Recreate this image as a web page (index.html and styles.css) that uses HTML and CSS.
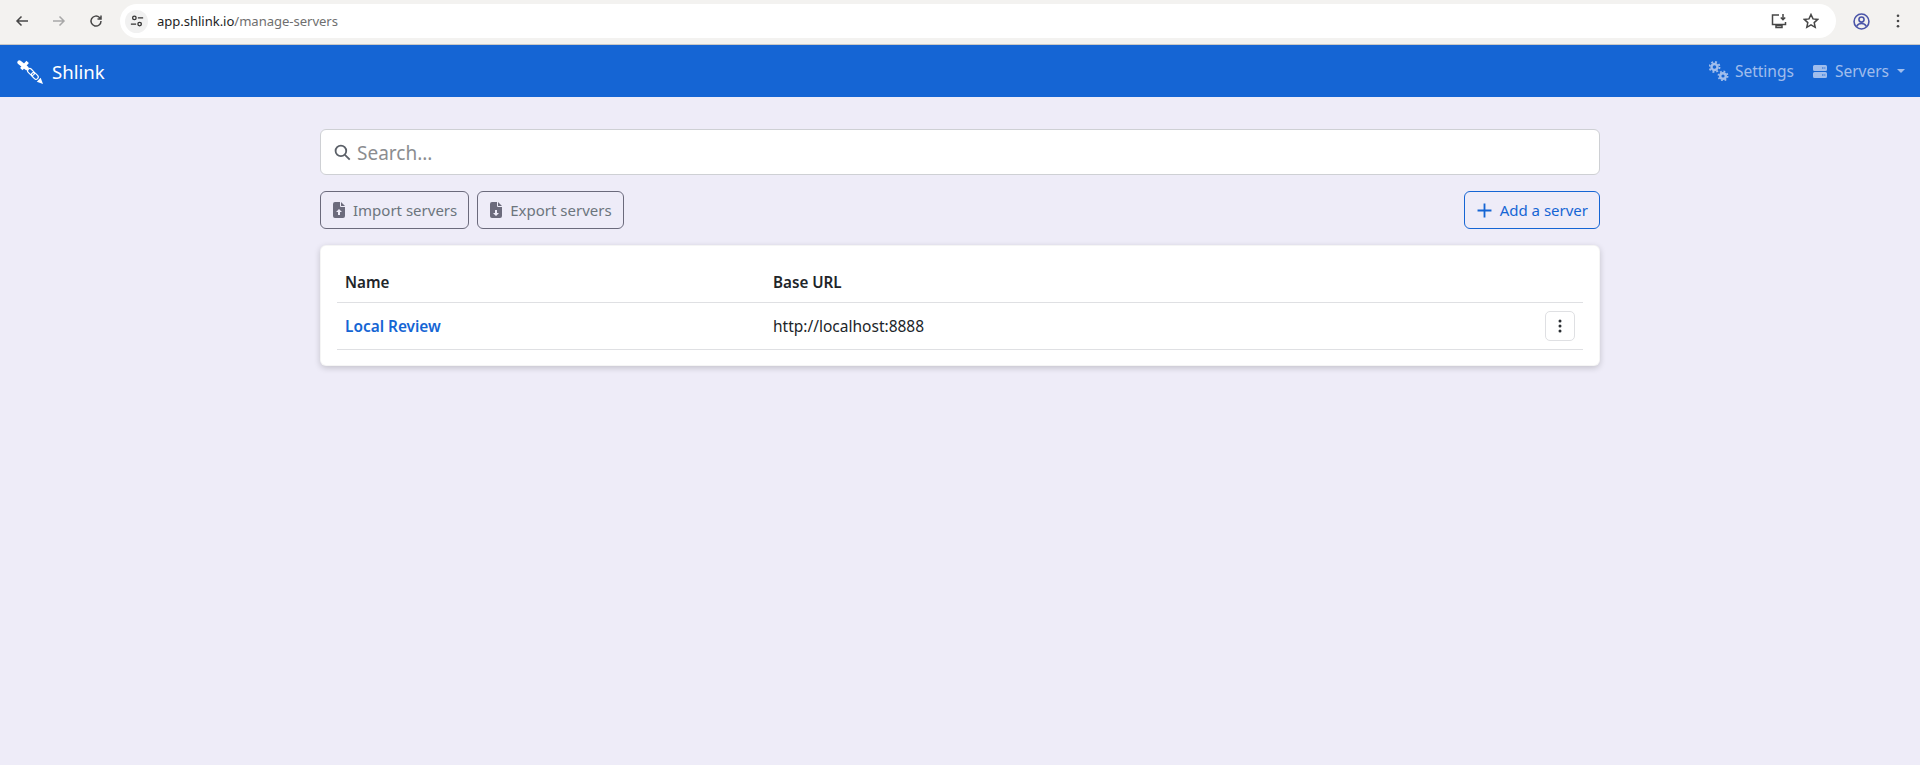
FILE: index.html
```html
<!DOCTYPE html>
<html lang="en">
<head>
<meta charset="utf-8">
<title>Shlink</title>
<link rel="stylesheet" href="styles.css">
</head>
<body>
<header class="toolbar">
  <div class="tb-nav">
    <svg class="tb-icon" viewBox="0 0 16 16"><path d="M14 8H3M7.500 3.500 3 8l4.500 4.500"/></svg>
    <svg class="tb-icon dim" viewBox="0 0 16 16"><path d="M2 8h11M8.500 3.500 13 8l-4.500 4.500"/></svg>
    <svg class="tb-icon" viewBox="0 0 16 16"><path d="M13 8a5 5 0 1 1-1.500-3.500L13 6M13 2.500V6H9.500"/></svg>
  </div>
  <div class="omnibox">
    <span class="chip"><svg viewBox="0 0 16 16"><circle cx="5" cy="4.500" r="2"/><path d="M9 4.500h6M1 11.500h6"/><circle cx="11" cy="11.500" r="2"/></svg></span>
    <span class="url">app.shlink.io<span class="url-path">/manage-servers</span></span>
    <span class="omni-end">
      <svg class="tb-icon" viewBox="0 0 16 16"><path d="M8 2H1.500v9.500h13V9M5 14.500h6v-2H5zM12 1v5.500M9.800 4.500l2.200 2.200 2.200-2.200"/></svg>
      <svg class="tb-icon" viewBox="0 0 16 16"><path d="m8 1.500 2 4.400 4.700.5-3.500 3.200 1 4.700L8 11.900l-4.200 2.400 1-4.700-3.500-3.200 4.700-.5z"/></svg>
    </span>
  </div>
  <div class="tb-end">
    <svg class="tb-icon profile" viewBox="0 0 16 16"><circle cx="8" cy="8" r="7"/><circle cx="8" cy="6.200" r="2.400"/><path d="M3.500 12.500c1-2 2.500-2.600 4.500-2.600s3.500.6 4.500 2.600"/></svg>
    <svg class="tb-dots" viewBox="0 0 4 16"><circle cx="2" cy="2" r="1.500"/><circle cx="2" cy="8" r="1.500"/><circle cx="2" cy="14" r="1.500"/></svg>
  </div>
</header>

<nav class="navbar">
  <a class="brand">
    <svg class="brand-logo" viewBox="0 0 28 28">
      <path class="logo-bar" d="M2.500 4.500 10 10.500"/>
      <path class="logo-cross" d="M4.500 11.500 11 4"/>
      <g class="logo-links"><rect x="10.500" y="12.200" width="8" height="4.600" rx="2.300" transform="rotate(45 14.500 14.500)"/><rect x="14.500" y="16.200" width="8" height="4.600" rx="2.300" transform="rotate(45 18.500 18.500)"/></g>
      <path class="logo-solid" d="m20.500 24.500 4-4 2.500 6.500z"/>
    </svg>
    <span>Shlink</span>
  </a>
  <div class="nav-links">
    <a class="nav-link">
      <svg class="ic-cogs" viewBox="0 0 20 20"><g class="gear"><circle cx="5.500" cy="6" r="3"/><circle class="teeth" cx="5.500" cy="6" r="5"/></g><g class="gear"><circle cx="14" cy="15" r="2.800"/><circle class="teeth small" cx="14" cy="15" r="4.500"/></g></svg>
      <span>Settings</span>
    </a>
    <a class="nav-link">
      <svg class="ic-server" viewBox="0 0 14 13"><path fill-rule="evenodd" d="M1.500 0h11A1.500 1.500 0 0 1 14 1.500v3A1.500 1.500 0 0 1 12.500 6h-11A1.500 1.500 0 0 1 0 4.500v-3A1.500 1.500 0 0 1 1.500 0zM9 2.500v1h1.500v-1zm2.300 0v1h1v-1zM1.500 7h11A1.500 1.500 0 0 1 14 8.500v3a1.500 1.500 0 0 1-1.500 1.500h-11A1.500 1.500 0 0 1 0 11.500v-3A1.500 1.500 0 0 1 1.500 7zM9 9.500v1h1.500v-1zm2.300 0v1h1v-1z"/></svg>
      <span>Servers</span>
      <i class="caret"></i>
    </a>
  </div>
</nav>

<main class="page">
  <div class="search">
    <svg class="search-icon" viewBox="0 0 16 16"><circle cx="6.500" cy="6.500" r="5"/><path d="m10.300 10.300 4.500 4.500"/></svg>
    <input class="search-input" placeholder="Search...">
  </div>
  <div class="actions">
    <div class="actions-left">
      <button class="btn btn-muted">
        <svg class="ic-file" viewBox="0 0 12 16"><path fill-rule="evenodd" d="M2 0h5v4a1 1 0 0 0 1 1h4v9a2 2 0 0 1-2 2H2a2 2 0 0 1-2-2V2a2 2 0 0 1 2-2zm6 0 4 4H8zM6 7 3 10h2v3h2v-3h2z"/></svg>
        Import servers
      </button>
      <button class="btn btn-muted">
        <svg class="ic-file" viewBox="0 0 12 16"><path fill-rule="evenodd" d="M2 0h5v4a1 1 0 0 0 1 1h4v9a2 2 0 0 1-2 2H2a2 2 0 0 1-2-2V2a2 2 0 0 1 2-2zm6 0 4 4H8zM6 14l3-3H7V8H5v3H3z"/></svg>
        Export servers
      </button>
    </div>
    <button class="btn btn-primary">
      <svg class="ic-plus" viewBox="0 0 14 14"><path d="M7 .5v13M.5 7h13"/></svg>
      Add a server
    </button>
  </div>
  <section class="card">
    <table class="table">
      <thead>
        <tr><th class="col-name">Name</th><th>Base URL</th><th></th></tr>
      </thead>
      <tbody>
        <tr>
          <td><a class="server-link">Local Review</a></td>
          <td>http://localhost:8888</td>
          <td class="cell-end">
            <button class="menu-btn"><svg viewBox="0 0 4 14"><circle cx="2" cy="2" r="1.500"/><circle cx="2" cy="7" r="1.500"/><circle cx="2" cy="12" r="1.500"/></svg></button>
          </td>
        </tr>
      </tbody>
    </table>
  </section>
</main>
</body>
</html>
```

FILE: styles.css
```css
* { box-sizing: border-box; }
html, body { margin: 0; padding: 0; height: 100%; }
body {
  background: #eeecf8;
  font-family: "Noto Sans", "Liberation Sans", sans-serif;
  font-size: 16px;
  color: #212529;
  overflow: hidden;
}
.toolbar {
  height: 45px;
  background: #f3f2f0;
  border-bottom: 1px solid #c9c8c6;
  display: flex;
  align-items: flex-start;
  padding-top: 4px;
}
.tb-nav {
  display: flex;
  width: 120px;
  padding-left: 14px;
  gap: 21px;
  height: 34px;
  align-items: center;
}
.tb-icon {
  width: 16px;
  height: 16px;
  fill: none;
  stroke: #474747;
  stroke-width: 1.500;
  flex: none;
}
.tb-icon.dim { stroke: #a8a8a8; }
.tb-icon.profile { stroke: #4a55a8; width: 17px; height: 17px; }
.omnibox {
  width: 1716px;
  height: 34px;
  background: #fff;
  border-radius: 17px;
  display: flex;
  align-items: center;
  padding: 0 17px 0 5px;
}
.chip {
  width: 23px;
  height: 23px;
  border-radius: 50%;
  background: #f1f1f1;
  display: flex;
  align-items: center;
  justify-content: center;
  margin-right: 9px;
}
.chip svg { width: 14px; height: 14px; fill: none; stroke: #333; stroke-width: 1.500; }
.url {
  font-size: 13.100px;
  letter-spacing: -0.050px;
  color: #1f1f1f;
  flex: 1;
}
.url-path { color: #6f6f6f; }
.omni-end { display: flex; gap: 16px; align-items: center; }
.tb-end {
  flex: 1;
  display: flex;
  align-items: center;
  height: 34px;
  padding-left: 17px;
  gap: 26px;
}
.tb-dots { width: 4px; height: 14px; fill: #474747; }

.navbar {
  height: 52px;
  background: #1565d4;
  display: flex;
  align-items: center;
  justify-content: space-between;
  padding: 0 15px 0 17px;
}
.brand {
  display: flex;
  align-items: center;
  gap: 8px;
  color: #fff;
  font-size: 18.600px;
}
.brand-logo { width: 27px; height: 27px; }
.logo-solid { fill: #fff; }
.logo-bar { fill: none; stroke: #fff; stroke-width: 4.200; stroke-linecap: round; }
.logo-cross { fill: none; stroke: #fff; stroke-width: 3.400; }
.logo-links rect { fill: none; stroke: #fff; stroke-width: 1.200; }
.nav-links { display: flex; gap: 19px; align-items: center; }
.nav-link {
  display: flex;
  align-items: center;
  color: #a0bdec;
  font-size: 15.500px;
}
.ic-cogs { width: 20px; height: 20px; margin-right: 6px; }
.gear circle { fill: none; stroke: #a0bdec; stroke-width: 2.400; }
.gear .teeth { stroke-width: 1.900; stroke-dasharray: 1.900 2.030; }
.gear .teeth.small { stroke-dasharray: 1.700 1.830; }
.ic-server { width: 14px; height: 13px; fill: #a0bdec; margin-right: 8px; }
.caret {
  width: 0;
  height: 0;
  margin-left: 8px;
  border-top: 4.500px solid #a0bdec;
  border-left: 4.500px solid transparent;
  border-right: 4.500px solid transparent;
}

.page {
  width: 1280px;
  margin: 32px auto 0;
}
.search { position: relative; }
.search-icon {
  position: absolute;
  left: 14px;
  top: 15px;
  width: 17px;
  height: 17px;
  fill: none;
  stroke: #5b6068;
  stroke-width: 1.700;
}
.search-input {
  display: block;
  width: 100%;
  height: 46px;
  padding: 2px 16px 0 36px;
  background: #fff;
  border: 1px solid #ced0d4;
  border-radius: 6px;
  font-family: inherit;
  font-size: 19px;
  outline: none;
}
.search-input::placeholder { color: #8b8d90; opacity: 1; }
.actions {
  display: flex;
  justify-content: space-between;
  margin-top: 16px;
}
.actions-left { display: flex; gap: 8px; }
.btn {
  height: 38px;
  padding: 0 11px 0 12px;
  background: transparent;
  border: 1px solid #6c757d;
  border-radius: 6px;
  font-family: inherit;
  font-size: 15px;
  display: flex;
  align-items: center;
  gap: 8px;
  white-space: nowrap;
}
.btn-muted { color: #6c757d; border-color: #6b6a7c; }
.btn-primary { color: #1565d4; border-color: #1565d4; }
.ic-file { width: 12px; height: 16px; fill: #6c6b7c; }
.ic-plus { width: 15px; height: 15px; fill: none; stroke: #1565d4; stroke-width: 1.700; }
.card {
  margin-top: 16px;
  height: 121px;
  background: #fff;
  border: 1px solid rgba(0, 0, 0, .04);
  border-radius: 6px;
  padding: 16px;
  box-shadow: 0 2px 6px rgba(0, 0, 0, .18);
}
.table {
  width: 100%;
  border-collapse: separate;
  border-spacing: 0;
  font-size: 15.500px;
}
.table th {
  text-align: left;
  font-weight: 600;
  font-size: 15.200px;
  height: 41px;
  padding: 0 8px;
  border-bottom: 1px solid #dfe0e3;
  color: #212529;
}
.col-name { width: 428px; }
.table td {
  height: 47px;
  padding: 0 8px;
  border-bottom: 1px solid #dfe0e3;
}
.server-link { color: #1565d4; font-weight: 600; font-size: 15.400px; }
.cell-end { width: 46px; }
.menu-btn {
  width: 30px;
  height: 30px;
  padding: 0;
  background: #fff;
  border: 1px solid #dfe0e3;
  border-radius: 5px;
  display: flex;
  align-items: center;
  justify-content: center;
}
.menu-btn svg { width: 4px; height: 14px; fill: #2b2f33; }
```
